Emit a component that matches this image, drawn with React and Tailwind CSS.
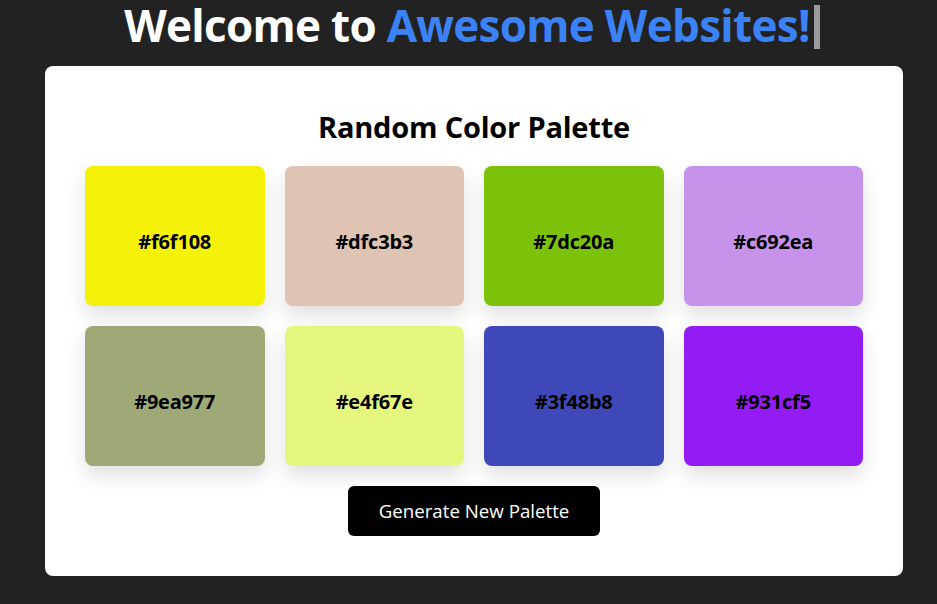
import React from "react";

const colors = [
  "#f6f108",
  "#dfc3b3",
  "#7dc20a",
  "#c692ea",
  "#9ea977",
  "#e4f67e",
  "#3f48b8",
  "#931cf5",
];

export default function App() {
  return (
    <div
      className="min-h-[604px] w-full bg-[#222222] overflow-hidden"
      style={{ fontFamily: '"Open Sans", "Noto Sans", sans-serif' }}
    >
      <div className="ml-[45px] w-[858px]">
        <h1 className="h-[66px] flex items-center justify-center text-[44px] font-bold leading-[60px] text-white tracking-[-0.7px] pb-[16px] pr-[4px]">
          <span>Welcome to&nbsp;</span>
          <span className="text-[#3b82f6]">Awesome Websites!</span>
          <span className="ml-[4px] inline-block w-[6px] h-[44px] bg-[#9a9a9a] relative top-[2px]"></span>
        </h1>
        <div className="bg-white rounded-lg px-10 pt-10 pb-10 flex flex-col items-center">
          <h2 className="text-[29px] font-bold leading-[34px] text-black tracking-[-0.2px] relative top-[4px]">
            Random Color Palette
          </h2>
          <div className="mt-[26px] grid grid-cols-4 gap-5 w-full">
            {colors.map((c) => (
              <div
                key={c}
                className="h-[140px] rounded-lg flex items-center justify-center pt-[12px] shadow-[0_10px_20px_rgba(0,0,0,0.12)]"
                style={{ backgroundColor: c }}
              >
                <span className="text-[20px] font-bold text-black tracking-[-0.2px]">{c}</span>
              </div>
            ))}
          </div>
          <button className="mt-5 w-[252px] h-[50px] bg-black text-white rounded-md text-[18.7px]">
            Generate New Palette
          </button>
        </div>
      </div>
    </div>
  );
}
